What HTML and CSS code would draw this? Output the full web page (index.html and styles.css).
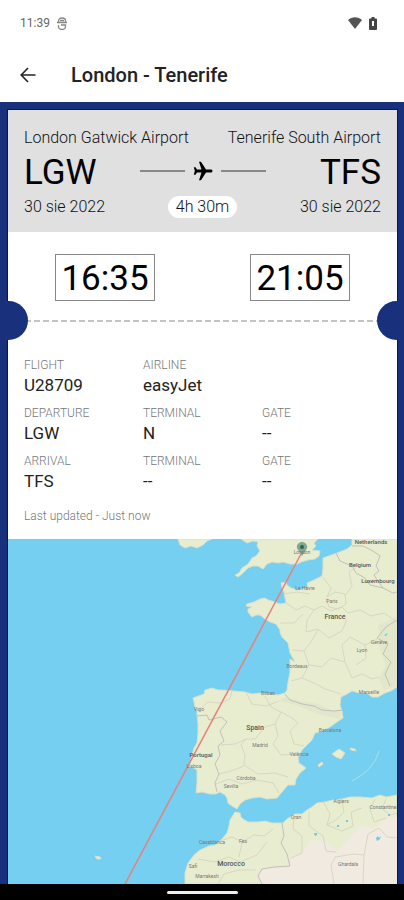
FILE: index.html
```html
<!DOCTYPE html>
<html lang="en">
<head>
    <meta charset="UTF-8">
    <meta name="viewport" content="width=device-width, initial-scale=1.0">
    <title>London - Tenerife</title>
    <link rel="stylesheet" href="styles.css">
</head>
<body>
    <div class="statusbar">
        <span>11:39</span>
        <svg class="app-icon" width="10" height="13" viewBox="0 0 10 13" fill="none" stroke="#888" stroke-width="1.3">
            <path d="M1.500 5V4a3 3 0 0 1 3-3h1a3 3 0 0 1 3 3v1M0 5.500h10M3 3.500h4M1.500 8v1.500a3 3 0 0 0 3 3h1a3 3 0 0 0 3-3V8H4"/>
        </svg>
        <svg class="wifi" width="14" height="12" viewBox="0 0 14 12">
            <path d="M0 3C4-.6 10-.6 14 3L7 12z" fill="#555"/>
        </svg>
        <svg width="8" height="13" viewBox="0 0 8 13">
            <path d="M2.500 0h3v1.500H7a1 1 0 0 1 1 1V12a1 1 0 0 1-1 1H1a1 1 0 0 1-1-1V2.500a1 1 0 0 1 1-1h1.500z" fill="#444"/>
            <path d="M3 4h2v5H3z" fill="#fff"/>
        </svg>
    </div>
    <header class="topbar">
        <button class="back" aria-label="Back">
            <svg width="16" height="16" viewBox="0 0 16 16" fill="none" stroke="#222" stroke-width="1.6">
                <path d="M15.500 8H1.500M8 1L1.200 8L8 15"/>
            </svg>
        </button>
        <h1>London - Tenerife</h1>
    </header>
    <main class="page">
        <article class="ticket">
            <section class="route">
                <div class="row airports">
                    <span>London Gatwick Airport</span>
                    <span>Tenerife South Airport</span>
                </div>
                <div class="row codes">
                    <span class="code">LGW</span>
                    <div class="path">
                        <i class="line"></i>
                        <svg width="20" height="20" viewBox="0 0 20 20">
                            <path d="M19.500 10c0-.9-.7-1.500-1.500-1.500h-5L8 .8H6l2.500 7.700H4L2.500 6.300H.8L1.800 10l-1 3.700h1.700L4 11.500h4.500L6 19.200h2l5-7.700h5c.8 0 1.500-.6 1.500-1.500z"/>
                        </svg>
                        <i class="line"></i>
                    </div>
                    <span class="code right">TFS</span>
                </div>
                <div class="row dates">
                    <span>30 sie 2022</span>
                    <span class="duration">4h 30m</span>
                    <span class="right">30 sie 2022</span>
                </div>
            </section>
            <section class="times">
                <time>16:35</time>
                <time>21:05</time>
            </section>
            <div class="tear"></div>
            <dl class="details">
                <div><dt>FLIGHT</dt><dd>U28709</dd></div>
                <div class="wide"><dt>AIRLINE</dt><dd>easyJet</dd></div>
                <div><dt>DEPARTURE</dt><dd>LGW</dd></div>
                <div><dt>TERMINAL</dt><dd>N</dd></div>
                <div><dt>GATE</dt><dd>--</dd></div>
                <div><dt>ARRIVAL</dt><dd>TFS</dd></div>
                <div><dt>TERMINAL</dt><dd>--</dd></div>
                <div><dt>GATE</dt><dd>--</dd></div>
            </dl>
            <p class="updated">Last updated - Just now</p>
            <svg class="map" viewBox="8 539 389 345" preserveAspectRatio="xMidYMid slice">
                <!-- land -->
                <g class="land">
                    <path d="M178 539L180 545L185 548L191 546L197 548L203 545L207 541L212 539z"/>
                    <path d="M241 539L247 543L253 541L258 542L257 546L260 551L256 556L252 558L248 564L242 568L239 573L235 575L238 577L242 574L248 568L253 566L258 566L263 569L267 564L272 562L278 563L283 562L290 564L297 564L301 562L308 560L315 559L319 556L320 551L312 550L316 546L314 543L318 539z"/>
                    <path d="M352 539L352 545L347 549L337 553L323 558L323 568L322 576L314 580L307 583L308 588L298 590L291 588L287 585L286 582L281 583L282 588L284 592L285 598L286 603L280 604L277 603L272 601L268 600L265 598L260 599L254 602L247 604L246 606L252 607L248 609L248 612L252 617L256 615L260 615L265 619L270 622L276 624L280 630L280 633L282 637L288 643L290 653L295 662L290 659L290 672L288 682L287 690L285 693L278 695L268 694L260 693L252 694L245 692L234 691L223 690L218 690L212 688L205 690L204 694L193 698L194 702L195 707L197 710L197 715L198 724L198 733L197 743L194 748L192 755L189 767L192 767L197 770L197 783L196 793L202 792L210 794L216 794L220 792L225 795L227 798L228 803L232 806L237 809L240 804L245 800L252 798L260 797L267 799L277 798L282 792L288 785L295 785L296 779L300 773L306 768L299 763L298 758L302 750L307 745L312 740L315 733L322 731L330 727L337 722L343 718L342 711L340 705L341 697L347 694L352 691L359 693L367 693L372 697L378 697L385 693L391 691L397 687V539z"/>
                    <path d="M185 884L185 873L188 863L194 855L200 850L209 846L215 845L222 839L227 833L229 826L230 820L235 812L240 813L241 817L243 819L248 822L258 822L265 821L272 823L283 823L287 819L295 814L302 814L307 810L312 807L317 803L325 802L333 800L342 799L350 797L361 797L372 798L380 795L386 797L397 795V884z"/>
                    <path d="M332 754L339 749L345 753L341 759L336 757zM350 748L355 749L356 751L351 750zM318 765L322 762L323 764L319 767zM95 856L100 857L101 859L97 859z"/>
                </g>
                <!-- uplands and desert -->
                <path class="hills" d="M285 697L300 701L318 704L334 711L341 709L341 719L325 716L308 710L296 705L279 701zM378 625L386 622L397 616V686L384 690L379 678L386 665L380 650z"/>
                <path class="desert" d="M260 884L260 872L266 867L289 868L291 856L302 853L311 840L326 841L337 851L351 836L361 825L374 829L386 819L397 817V884z"/>
                <!-- borders -->
                <g class="borders">
                    <path d="M336 553L340 561L352 566L356 573L365 578L370 585L383 588L393 593L397 592M352 546L363 546L373 551L380 556L376 566L379 571L374 575L378 581L383 588M397 620L386 627L377 638L388 644L383 654L391 662L385 674L390 686"/>
                    <path d="M285 694L290 700L302 704L314 706L322 710L334 711L343 710M197 716L207 715L209 720L221 717L227 722L220 731L224 741L218 746L220 755L215 764L219 774L215 783L217 792"/>
                    <path d="M282 823L284 836L281 843L287 854L290 866L274 867L262 869L258 876L262 884"/>
                </g>
                <g class="regions">
                    <path d="M286 603L296 610L305 606L314 610L322 606L331 611L342 607L348 613L360 610L371 616L384 613L397 622M323 577L331 588L327 597L335 592L345 594L346 604L338 609L329 607L326 598M345 596L352 586L349 572L355 568M314 610L307 620L306 632L318 629L329 638L342 631L347 619M292 650L304 651L311 642L318 630M304 651L309 665L302 678L291 681M309 665L322 667L331 658L345 662L352 678L362 674L372 679L379 677M345 662L342 645L350 637L365 645L366 658L356 665M280 623L294 623L303 614M284 594L297 592L310 594M302 678L316 684L325 689L341 694M365 645L379 638"/>
                    <path d="M221 745L235 744L246 739L255 739L265 727L275 724L281 712L271 707L265 696M246 739L241 745L245 755L244 765L258 774L275 773L288 777M219 774L231 771L244 766M275 724L278 736L273 744L281 755L294 754M281 712L292 718L298 723L290 731L294 744L304 746M232 691L230 699L221 703L208 702L198 711M246 692L252 704L266 706L279 701M216 784L229 779L242 784L257 780L273 783L279 793"/>
                    <path d="M220 841L232 837L242 842L254 835L264 836L273 829M198 859L214 862L229 857L240 862L257 855L267 842M242 842L239 857M218 884L224 874L239 870L256 870M294 817L293 829L302 836L302 853M309 811L309 826L323 836L326 851L336 852M324 803L330 814L327 825L342 831L353 826L351 812L362 808M342 800L344 812L336 820L327 825M375 799L370 809L374 822L386 818M386 799L382 809L390 815L397 813M336 856L331 865L334 884M336 857L353 854L364 855L363 884M364 855L368 834L379 828L387 837L397 838M302 853L291 858"/>
                </g>
                <path class="lakes" d="M384 635l4-2-2 3zM314 833h3v2l-2 1zM346 820h2v2h-2zM337 825h2v2h-2zM376 838l2-2 1 2 2-2-1 3-3 2zM388 814h2v2h-2z"/>
                <path class="ferry" d="M352 781Q374 770 379 751"/>
                <line class="flightline" x1="301" y1="554" x2="125" y2="884"/>
                <g class="pin">
                    <path d="M302 556L298 550a5 5 0 1 1 8 0z"/>
                    <circle cx="302" cy="547" r="2"/>
                </g>
                <g class="country">
                    <text x="335" y="619">France</text>
                    <text x="255" y="730">Spain</text>
                    <text x="231" y="866">Morocco</text>
                    <text class="medium" x="201" y="757">Portugal</text>
                    <text class="medium" x="360" y="567">Belgium</text>
                    <text class="medium" x="378" y="583">Luxembourg</text>
                    <text class="medium" x="371" y="544">Netherlands</text>
                </g>
                <g class="city">
                    <text x="302" y="554">London</text>
                    <text x="305" y="590">Le Havre</text>
                    <text x="332" y="603">Paris</text>
                    <text x="379" y="644">Genève</text>
                    <text x="362" y="652">Lyon</text>
                    <text x="297" y="668">Bordeaux</text>
                    <text x="369" y="694">Marseille</text>
                    <text x="268" y="695">Bilbao</text>
                    <text x="199" y="711">Vigo</text>
                    <text x="330" y="732">Barcelona</text>
                    <text x="260" y="747">Madrid</text>
                    <text x="299" y="756">València</text>
                    <text x="246" y="780">Córdoba</text>
                    <text x="231" y="788">Sevilla</text>
                    <text x="194" y="768">Lisboa</text>
                    <text x="341" y="803">Algiers</text>
                    <text x="296" y="819">Oran</text>
                    <text x="383" y="809">Constantine</text>
                    <text x="212" y="844">Casablanca</text>
                    <text x="243" y="843">Fès</text>
                    <text x="207" y="878">Marrakesh</text>
                    <text x="348" y="866">Ghardaïa</text>
                    <text x="193" y="868">Safi</text>
                </g>
            </svg>
        </article>
    </main>
    <footer class="navbar"><i></i></footer>
</body>
</html>
```

FILE: styles.css
```css
*{
    box-sizing: border-box;
}
body{
    margin: 0;
    min-height: 100vh;
    display: flex;
    flex-direction: column;
    background-color: white;
    font-family: Roboto, "Liberation Sans", sans-serif;
    color: #222;
}
.statusbar{
    display: flex;
    align-items: center;
    gap: 7px;
    height: 46px;
    padding: 0 27px 0 20px;
    font-size: 12px;
    color: #666;
}
.wifi{
    margin-left: auto;
}
.topbar{
    display: flex;
    align-items: center;
    gap: 35px;
    height: 56px;
    padding: 2px 20px 0;
}
.back{
    display: flex;
    padding: 0;
    border: none;
    background: none;
}
h1{
    margin: 0;
    font-size: 20px;
    font-weight: 500;
}
.page{
    flex: 1;
    display: flex;
    padding: 8px 7px 0 8px;
    background-color: #19307d;
}
.ticket{
    flex: 1;
    display: flex;
    flex-direction: column;
    min-width: 0;
    background-color: white;
    box-shadow: 0 0 0 1px #060f7c;
}
.route{
    padding: 17px 16px 14px;
    background-color: #e0e0e0;
}
.row{
    display: flex;
    justify-content: space-between;
    align-items: center;
}
.airports, .dates{
    font-size: 16px;
    font-weight: 300;
    line-height: 22px;
    color: #111;
}
.codes{
    height: 47px;
}
.code{
    flex: 1;
    font-size: 35px;
    line-height: 47px;
    color: black;
}
.right{
    text-align: right;
}
.path{
    display: flex;
    align-items: center;
    gap: 8px;
    padding-bottom: 4px;
}
.line{
    width: 45px;
    height: 2px;
    background-color: #888;
}
.dates span{
    flex: 1;
}
.dates .duration{
    flex: none;
    padding: 0 8px;
    border-radius: 11px;
    background-color: white;
}
.times{
    display: flex;
    justify-content: space-between;
    padding: 22px 47px 0;
}
time{
    width: 100px;
    border: 1px solid #888;
    padding-top: 2px;
    font-size: 35px;
    line-height: 43px;
    text-align: center;
    color: black;
}
/* dashed line with a notch at each edge */
.tear{
    display: flex;
    align-items: center;
    justify-content: space-between;
    height: 39px;
    margin: 0 -1px;
    background: repeating-linear-gradient(90deg, #c4c4c4 0 6px, transparent 6px 9px) center / 100% 2px no-repeat;
}
.tear::before, .tear::after{
    content: "";
    width: 21px;
    height: 39px;
    background-color: #19307d;
    border-radius: 0 20px 20px 0;
}
.tear::after{
    border-radius: 20px 0 0 20px;
}
.details{
    display: grid;
    grid-template-columns: repeat(3, 1fr);
    row-gap: 8px;
    margin: 0;
    padding: 17px 16px 0;
}
.wide{
    grid-column: span 2;
}
dt{
    font-size: 12px;
    font-weight: 300;
    line-height: 17px;
    color: #777;
}
dd{
    margin: 0;
    font-size: 17px;
    line-height: 23px;
}
.updated{
    margin: 0;
    padding: 13px 16px;
    font-size: 12px;
    font-weight: 300;
    line-height: 20px;
    color: #777;
}
.map{
    display: block;
    flex: 1;
    width: 100%;
    background-color: #74cff0;
}
.land{
    fill: #e9edcf;
    stroke: #d9dfc9;
    stroke-width: 1;
}
.hills{
    fill: #e2e6cb;
}
.desert{
    fill: #f0eae1;
}
.borders{
    fill: none;
    stroke: #c3bfbc;
}
.regions{
    fill: none;
    stroke: #d8d7c4;
}
.lakes{
    fill: #6cc9ea;
}
.ferry{
    fill: none;
    stroke: #a9dff0;
}
.flightline{
    stroke: #ea7f7c;
    stroke-width: 1.5;
}
.pin path{
    fill: #7faa91;
}
.pin circle{
    fill: #34624e;
}
.country, .city{
    text-anchor: middle;
    font-size: 7px;
    font-weight: 500;
    fill: #555;
}
.country .medium{
    font-size: 6px;
}
.city{
    font-size: 5px;
    font-weight: 400;
    fill: #777;
}
.navbar{
    display: flex;
    justify-content: center;
    align-items: center;
    height: 16px;
    background-color: black;
}
.navbar i{
    width: 71px;
    height: 3px;
    border-radius: 2px;
    background-color: #eee;
}
```
